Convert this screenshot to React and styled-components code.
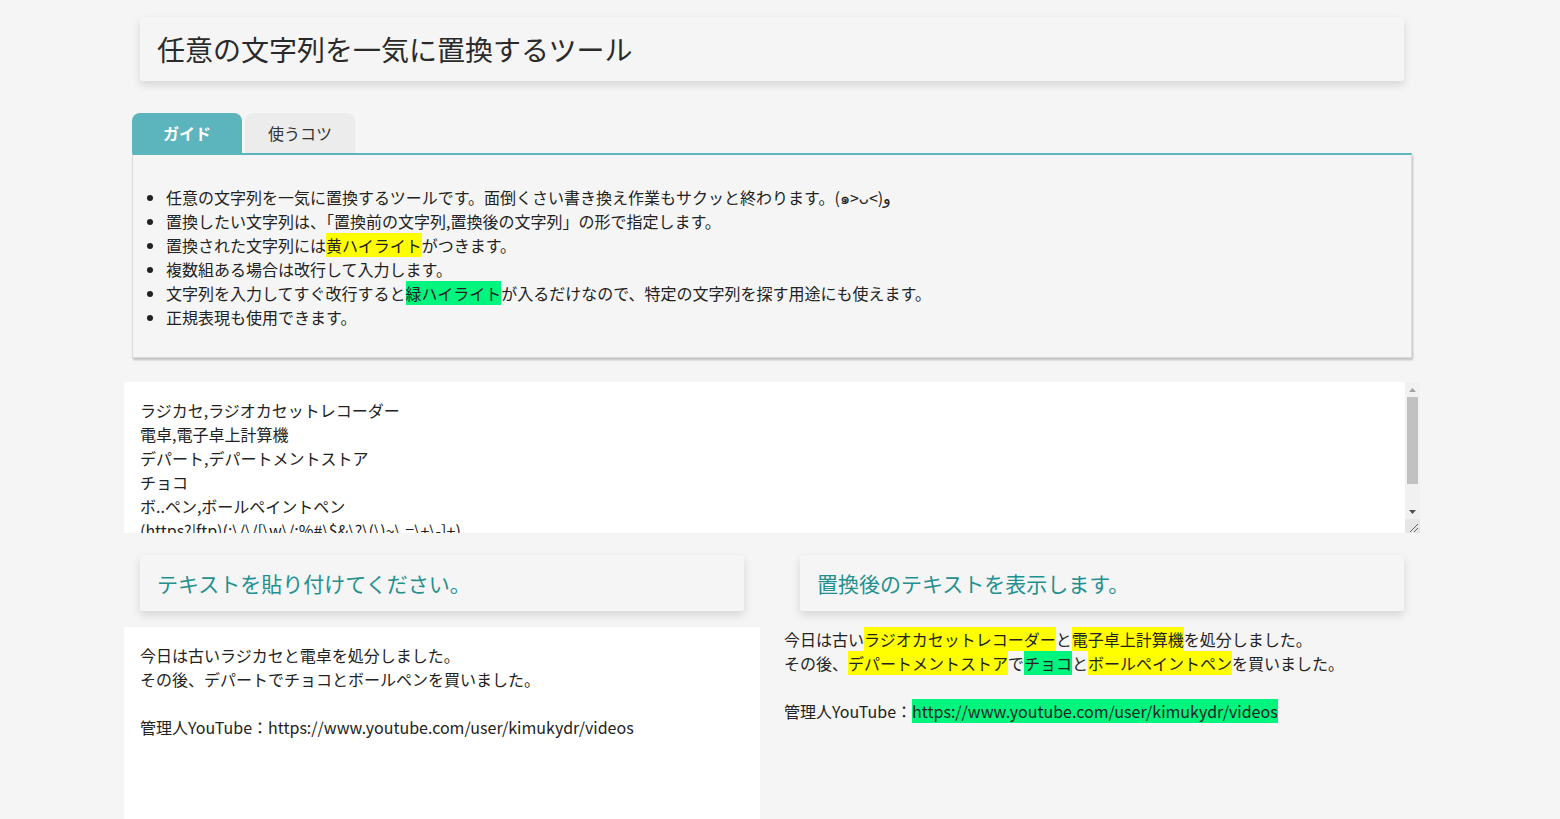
import React, { useState } from "react";
import styled, { createGlobalStyle } from "styled-components";

const GlobalStyle = createGlobalStyle`
  body {
    margin: 0;
    padding-right: 16px;
    background: #f5f5f5;
    color: #222;
    font-family: "Noto Sans CJK JP", "Noto Sans", sans-serif;
  }
`;

const RULES = `ラジカセ,ラジオカセットレコーダー
電卓,電子卓上計算機
デパート,デパートメントストア
チョコ
ボ..ペン,ボールペイントペン
(https?|ftp)(:\\/\\/[\\w\\/:%#\\$&\\?\\(\\)~\\.=\\+\\-]+)`;

const SOURCE = `今日は古いラジカセと電卓を処分しました。
その後、デパートでチョコとボールペンを買いました。

管理人YouTube：https://www.youtube.com/user/kimukydr/videos`;

const GUIDE = [
  ["任意の文字列を一気に置換するツールです。面倒くさい書き換え作業もサクッと終わります。(๑>ᴗ<)و"],
  ["置換したい文字列は、「置換前の文字列,置換後の文字列」の形で指定します。"],
  ["置換された文字列には", { hl: "yellow", text: "黄ハイライト" }, "がつきます。"],
  ["複数組ある場合は改行して入力します。"],
  ["文字列を入力してすぐ改行すると", { hl: "green", text: "緑ハイライト" }, "が入るだけなので、特定の文字列を探す用途にも使えます。"],
  ["正規表現も使用できます。"],
];

// run every rule line over the text, keep track of what got replaced
const convert = (rules, text) => {
  let parts = [{ text }];
  rules.split("\n").forEach((line) => {
    if (!line) return;
    const idx = line.indexOf(",", line.startsWith("(") ? line.lastIndexOf(")") : 0);
    const from = idx >= 0 ? line.slice(0, idx) : line;
    const to = idx >= 0 ? line.slice(idx + 1) : null;
    let re;
    try {
      re = new RegExp(from, "g");
    } catch (e) {
      return;
    }
    const next = [];
    parts.forEach((p) => {
      if (p.hl) return next.push(p);
      let last = 0;
      p.text.replace(re, (m, ...rest) => {
        const at = rest[rest.length - 2];
        if (at > last) next.push({ text: p.text.slice(last, at) });
        next.push(to === null ? { text: m, hl: "green" } : { text: to, hl: "yellow" });
        last = at + m.length;
        return m;
      });
      if (last < p.text.length) next.push({ text: p.text.slice(last) });
    });
    parts = next;
  });
  return parts;
};

const App = () => {
  const [tab, setTab] = useState(0);
  const [rules, setRules] = useState(RULES);
  const [source, setSource] = useState(SOURCE);
  const result = convert(rules, source);

  return (
    <>
      <GlobalStyle />
      <Page>
        <TitleCard>
          <h1>任意の文字列を一気に置換するツール</h1>
        </TitleCard>

        <Tabs>
          <Tab active={tab === 0} onClick={() => setTab(0)}>
            ガイド
          </Tab>
          <Tab active={tab === 1} onClick={() => setTab(1)}>
            使うコツ
          </Tab>
        </Tabs>

        <TabPanel>
          <GuideList>
            {GUIDE.map((row, i) => (
              <li key={i}>
                {row.map((piece, j) =>
                  typeof piece === "string" ? (
                    piece
                  ) : (
                    <Mark key={j} color={piece.hl}>
                      {piece.text}
                    </Mark>
                  )
                )}
              </li>
            ))}
          </GuideList>
        </TabPanel>

        <RuleBox>
          <RuleInput
            value={rules}
            onChange={(e) => setRules(e.target.value)}
            spellCheck={false}
          />
          {/* the classic scrollbar of the reference, drawn since headless hides it */}
          <Rail>
            <RailButton>
              <svg width="7" height="4" viewBox="0 0 7 4">
                <path d="M3.5 0 L7 4 L0 4 Z" fill="#a3a3a3" />
              </svg>
            </RailButton>
            <RailTrack>
              <Thumb />
            </RailTrack>
            <RailButton>
              <svg width="7" height="4" viewBox="0 0 7 4">
                <path d="M0 0 L7 0 L3.5 4 Z" fill="#505050" />
              </svg>
            </RailButton>
            <Grip>
              <svg width="15" height="14" viewBox="0 0 15 14">
                <path d="M13 5 L5 13 M13 9 L9 13" stroke="#666" strokeWidth="1" />
              </svg>
            </Grip>
          </Rail>
        </RuleBox>

        <Columns>
          <Column>
            <SectionHead>
              <h2>テキストを貼り付けてください。</h2>
            </SectionHead>
            <SourceInput
              value={source}
              onChange={(e) => setSource(e.target.value)}
              spellCheck={false}
            />
          </Column>

          <Column>
            <SectionHead>
              <h2>置換後のテキストを表示します。</h2>
            </SectionHead>
            <Output>
              {result.map((p, i) =>
                p.hl ? (
                  <Mark key={i} color={p.hl}>
                    {p.text}
                  </Mark>
                ) : (
                  <span key={i}>{p.text}</span>
                )
              )}
            </Output>
          </Column>
        </Columns>
      </Page>
    </>
  );
};

const Page = styled.div`
  width: 1296px;
  margin: 0 auto;
  padding-top: 17px;
`;

const TitleCard = styled.header`
  margin: 0 16px;
  height: 64px;
  padding: 0 17px;
  display: flex;
  align-items: center;
  background: #f5f5f5;
  border-radius: 3px;
  box-shadow: 0 4px 10px rgba(0, 0, 0, 0.13);

  h1 {
    margin: 0;
    font-size: 28px;
    font-weight: 400;
    color: #2a2a2a;
  }
`;

const Tabs = styled.div`
  display: flex;
  gap: 3px;
  margin: 32px 8px 0 8px;
`;

const Tab = styled.button`
  width: 110px;
  height: 40px;
  border: none;
  border-radius: 8px 8px 0 0;
  font-family: inherit;
  font-size: 16px;
  font-weight: ${(p) => (p.active ? 700 : 400)};
  color: ${(p) => (p.active ? "#fff" : "#333")};
  background: ${(p) => (p.active ? "#5cb4bd" : "#ececec")};
  cursor: pointer;
`;

const TabPanel = styled.section`
  margin: 0 8px;
  padding: 14px 12px 12px 12px;
  background: #f5f5f5;
  border: 1px solid #dcdcdc;
  border-top: 2px solid #5cb4bd;
  box-shadow: 1px 2px 2px rgba(0, 0, 0, 0.22);
`;

const GuideList = styled.ul`
  margin: 16px 0;
  padding-left: 21px;
  font-size: 16px;
  line-height: 24px;
  color: #222;
`;

const Mark = styled.span`
  display: inline-block;
  line-height: 24px;
  background: ${(p) => (p.color === "green" ? "#00f57f" : "#ffff00")};
`;

const Field = styled.textarea`
  display: block;
  box-sizing: border-box;
  width: 100%;
  padding: 16px;
  border: none;
  outline: none;
  background: #fff;
  font-family: inherit;
  font-size: 16px;
  line-height: 24px;
  color: #222;
  resize: vertical;
`;

const RuleBox = styled.div`
  display: flex;
  height: 151px;
  margin-top: 24px;
  background: #fff;
`;

const RuleInput = styled(Field)`
  flex: 1;
  height: 100%;
  resize: none;
  scrollbar-width: none;

  &::-webkit-scrollbar {
    display: none;
  }
`;

const Rail = styled.div`
  width: 15px;
  display: flex;
  flex-direction: column;
  background: #f1f1f1;
`;

const RailButton = styled.div`
  height: 15px;
  display: flex;
  align-items: center;
  justify-content: center;
`;

const RailTrack = styled.div`
  flex: 1;
  padding: 0 2px;
`;

const Thumb = styled.div`
  height: 87px;
  background: #c1c1c1;
`;

const Grip = styled.div`
  height: 14px;
  background: #e6e6e6;
  display: flex;
`;

const SourceInput = styled(Field)`
  height: 240px;
`;

const Columns = styled.div`
  display: grid;
  grid-template-columns: 636px 636px;
  gap: 24px;
  margin-top: 22px;
`;

const Column = styled.div`
  display: flex;
  flex-direction: column;
`;

const SectionHead = styled.div`
  margin: 0 16px 16px 16px;
  height: 56px;
  padding: 0 17px;
  display: flex;
  align-items: center;
  background: #f5f5f5;
  border-radius: 3px;
  box-shadow: 0 4px 10px rgba(0, 0, 0, 0.13);

  h2 {
    margin: 0;
    font-size: 21px;
    font-weight: 400;
    color: #23908f;
  }
`;

const Output = styled.div`
  font-size: 16px;
  line-height: 24px;
  color: #222;
  white-space: pre-wrap;
`;

export default App;
